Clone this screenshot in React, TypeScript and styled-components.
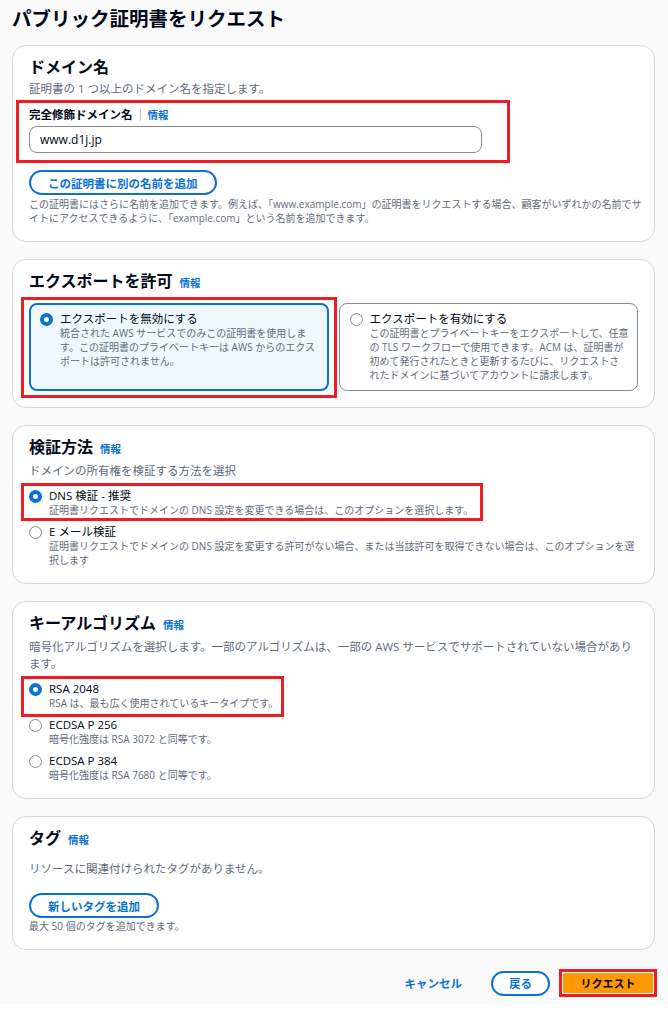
import React from 'react';
import styled, { createGlobalStyle } from 'styled-components';

// ACM「パブリック証明書をリクエスト」画面

const GlobalStyle = createGlobalStyle`
  html, body {
    margin: 0;
    padding: 0;
    background: #ffffff;
  }
  body {
    font-family: "Open Sans", "Noto Sans CJK JP", sans-serif;
    color: #000716;
  }
  * {
    box-sizing: border-box;
  }
`;

const Page = styled.div`
  width: 668px;
  background: #fafafa;
  padding: 6px 13px 7px 12px;
`;

const Title = styled.h1`
  margin: 0 0 13px;
  font-size: 19.5px;
  line-height: 26px;
  font-weight: 700;
`;

const Stack = styled.div`
  display: flex;
  flex-direction: column;
  gap: 17px;
`;

const Card = styled.section`
  background: #ffffff;
  border: 1px solid #d5d8dc;
  border-radius: 14px;
  padding: 11px 16px 16px;
`;

const Heading = styled.h2`
  margin: 0;
  display: flex;
  align-items: baseline;
  gap: 7px;
  font-size: 16px;
  line-height: 20px;
  font-weight: 700;
`;

const Info = styled.a`
  font-size: 10.5px;
  font-weight: 700;
  color: #0972d3;
  text-decoration: none;
  cursor: pointer;
`;

const Subtitle = styled.p`
  margin: 3px 0 0;
  font-size: 11.5px;
  line-height: 17px;
  color: #5f6b7a;
`;

// スクリーンショット上の赤い枠
const Highlight = styled.div<{ $m: string; $p: string; $w?: string }>`
  border: 3px solid #ee1c25;
  margin: ${(p) => p.$m};
  padding: ${(p) => p.$p};
  width: ${(p) => p.$w || 'auto'};
`;

const FieldLabel = styled.div`
  display: flex;
  align-items: center;
  font-size: 11.5px;
  line-height: 16px;
  font-weight: 700;
`;

const Divider = styled.span`
  width: 1px;
  height: 12px;
  background: #c6c6cd;
  margin: 0 7px;
`;

const TextInput = styled.input`
  display: block;
  width: 453px;
  height: 27px;
  margin-top: 3px;
  padding: 0 10px;
  border: 1px solid #8c8c94;
  border-radius: 8px;
  background: #ffffff;
  font-family: inherit;
  font-size: 12px;
  color: #000716;
  outline: none;
`;

const PillButton = styled.button<{ $mt?: number }>`
  display: inline-flex;
  align-items: center;
  height: 25px;
  margin-top: ${(p) => p.$mt ?? 7}px;
  padding: 0 17px;
  border: 2px solid #0972d3;
  border-radius: 20px;
  background: #ffffff;
  font-family: inherit;
  font-size: 11.5px;
  font-weight: 700;
  color: #0972d3;
  cursor: pointer;
`;

const Hint = styled.p<{ $mt?: number }>`
  margin: ${(p) => p.$mt ?? 2}px -4px 0 0;
  font-size: 10px;
  line-height: 14px;
  color: #5f6b7a;
`;

const TileGrid = styled.div`
  display: grid;
  grid-template-columns: 1fr 1fr;
  gap: 10px;
  margin-top: 10px;
`;

const Tile = styled.label<{ $selected?: boolean }>`
  display: flex;
  align-items: flex-start;
  gap: 7px;
  height: 100%;
  border: ${(p) => (p.$selected ? '2px solid #0972d3' : '1px solid #8c8c94')};
  border-radius: 8px;
  background: ${(p) => (p.$selected ? '#f0f8ff' : '#ffffff')};
  padding: ${(p) => (p.$selected ? '7px 7px 7px 9px' : '8px 8px 8px 10px')};
  cursor: pointer;
`;

const Radio = styled.span<{ $checked?: boolean }>`
  flex: none;
  width: 13px;
  height: 13px;
  margin-top: 0.5px;
  border-radius: 50%;
  background: #ffffff;
  border: ${(p) => (p.$checked ? '4px solid #0972d3' : '1.5px solid #8c8c94')};
`;

const OptionText = styled.div`
  display: flex;
  flex-direction: column;
`;

const OptionTitle = styled.span`
  font-size: 11.5px;
  line-height: 14px;
  color: #000716;
`;

const OptionDesc = styled.span`
  font-size: 10px;
  line-height: 14px;
  color: #5f6b7a;
`;

const RadioList = styled.div`
  display: flex;
  flex-direction: column;
  align-items: flex-start;
  gap: 8px;
  margin-top: 10px;
`;

const Option = styled.label`
  display: flex;
  align-items: flex-start;
  gap: 7px;
  cursor: pointer;
`;

const EmptyText = styled.p`
  margin: 10px 0 0;
  font-size: 11.5px;
  line-height: 17px;
  color: #5f6b7a;
`;

const Footer = styled.div`
  display: flex;
  justify-content: flex-end;
  align-items: center;
  margin: 19px -2px 0 0;
`;

const LinkButton = styled.button`
  border: none;
  background: none;
  padding: 0;
  margin-right: 29px;
  font-family: inherit;
  font-size: 11.5px;
  font-weight: 700;
  color: #0972d3;
  cursor: pointer;
`;

const BackButton = styled(PillButton)`
  margin: 0 9px 0 0;
  width: 59px;
  justify-content: center;
  padding: 0;
`;

const PrimaryButton = styled.button`
  display: flex;
  align-items: center;
  justify-content: center;
  width: 90px;
  height: 20px;
  border: none;
  border-radius: 2px;
  background: #ff9900;
  font-family: inherit;
  font-size: 11px;
  font-weight: 700;
  color: #000716;
  cursor: pointer;
`;

type Choice = { title: string; desc: string; checked?: boolean };

const RadioOption = ({ title, desc, checked }: Choice) => (
  <Option>
    <Radio $checked={checked} />
    <OptionText>
      <OptionTitle>{title}</OptionTitle>
      <OptionDesc>{desc}</OptionDesc>
    </OptionText>
  </Option>
);

const ExportTile = ({ title, desc, checked }: Choice) => (
  <Tile $selected={checked}>
    <Radio $checked={checked} />
    <OptionText>
      <OptionTitle>{title}</OptionTitle>
      <OptionDesc>{desc}</OptionDesc>
    </OptionText>
  </Tile>
);

const App = () => {
  return (
    <>
      <GlobalStyle />
      <Page>
        <Title>パブリック証明書をリクエスト</Title>
        <Stack>
          {/* ドメイン名 */}
          <Card>
            <Heading>ドメイン名</Heading>
            <Subtitle>証明書の 1 つ以上のドメイン名を指定します。</Subtitle>
            <Highlight $m="3px 0 0 -13px" $p="4px 25px 7px 10px" $w="494px">
              <FieldLabel>
                完全修飾ドメイン名
                <Divider />
                <Info>情報</Info>
              </FieldLabel>
              <TextInput defaultValue="www.d1j.jp" />
            </Highlight>
            <PillButton>この証明書に別の名前を追加</PillButton>
            <Hint>
              この証明書にはさらに名前を追加できます。例えば、「www.example.com」の証明書をリクエストする場合、顧客がいずれかの名前でサイトにアクセスできるように、「example.com」という名前を追加できます。
            </Hint>
          </Card>

          {/* エクスポート */}
          <Card>
            <Heading>
              エクスポートを許可<Info>情報</Info>
            </Heading>
            <TileGrid>
              <Highlight $m="-6px -8px -7px -8px" $p="3px 5px 4px 5px">
                <ExportTile
                  checked
                  title="エクスポートを無効にする"
                  desc="統合された AWS サービスでのみこの証明書を使用します。この証明書のプライベートキーは AWS からのエクスポートは許可されません。"
                />
              </Highlight>
              <ExportTile
                title="エクスポートを有効にする"
                desc="この証明書とプライベートキーをエクスポートして、任意の TLS ワークフローで使用できます。ACM は、証明書が初めて発行されたときと更新するたびに、リクエストされたドメインに基づいてアカウントに請求します。"
              />
            </TileGrid>
          </Card>

          {/* 検証方法 */}
          <Card>
            <Heading>
              検証方法<Info>情報</Info>
            </Heading>
            <Subtitle>ドメインの所有権を検証する方法を選択</Subtitle>
            <RadioList>
              <Highlight $m="-6px 0 -4px -8px" $p="3px 7px 1px 5px">
                <RadioOption
                  checked
                  title="DNS 検証 - 推奨"
                  desc="証明書リクエストでドメインの DNS 設定を変更できる場合は、このオプションを選択します。"
                />
              </Highlight>
              <RadioOption
                title="E メール検証"
                desc="証明書リクエストでドメインの DNS 設定を変更する許可がない場合、または当該許可を取得できない場合は、このオプションを選択します"
              />
            </RadioList>
          </Card>

          {/* キーアルゴリズム */}
          <Card>
            <Heading>
              キーアルゴリズム<Info>情報</Info>
            </Heading>
            <Subtitle>
              暗号化アルゴリズムを選択します。一部のアルゴリズムは、一部の AWS サービスでサポートされていない場合があります。
            </Subtitle>
            <RadioList>
              <Highlight $m="-6px 0 -7px -8px" $p="3px 3px 4px 5px">
                <RadioOption checked title="RSA 2048" desc="RSA は、最も広く使用されているキータイプです。" />
              </Highlight>
              <RadioOption title="ECDSA P 256" desc="暗号化強度は RSA 3072 と同等です。" />
              <RadioOption title="ECDSA P 384" desc="暗号化強度は RSA 7680 と同等です。" />
            </RadioList>
          </Card>

          {/* タグ */}
          <Card>
            <Heading>
              タグ<Info>情報</Info>
            </Heading>
            <EmptyText>リソースに関連付けられたタグがありません。</EmptyText>
            <PillButton $mt={16}>新しいタグを追加</PillButton>
            <Hint $mt={1}>最大 50 個のタグを追加できます。</Hint>
          </Card>
        </Stack>

        <Footer>
          <LinkButton>キャンセル</LinkButton>
          <BackButton>戻る</BackButton>
          <Highlight $m="0" $p="1px">
            <PrimaryButton>リクエスト</PrimaryButton>
          </Highlight>
        </Footer>
      </Page>
    </>
  );
};

export default App;
